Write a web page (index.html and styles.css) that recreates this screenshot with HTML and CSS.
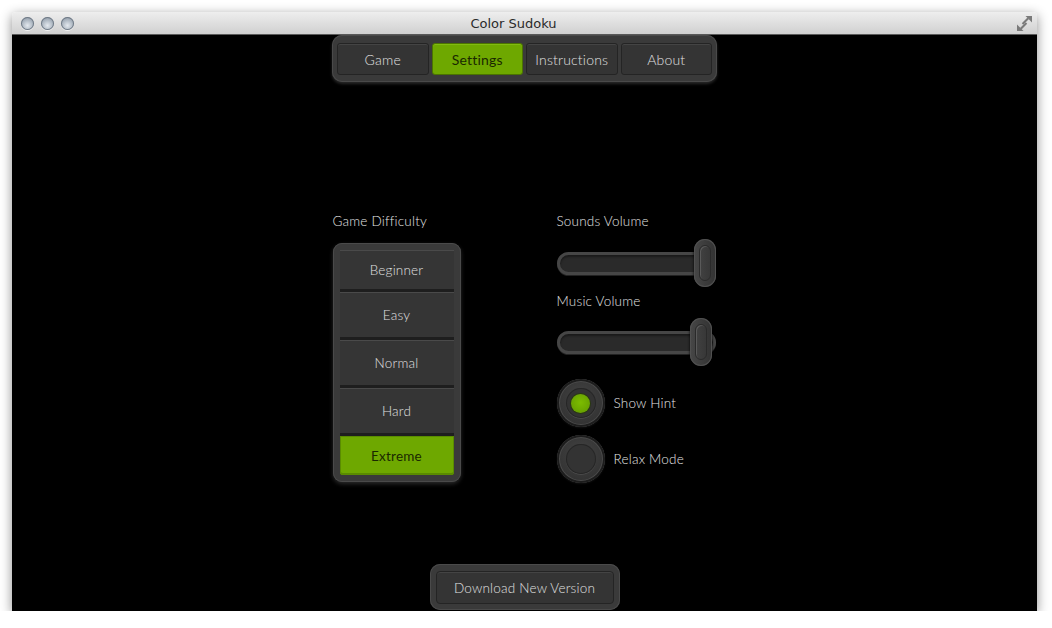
FILE: index.html
```html
<!DOCTYPE html>
<html lang="en">
<head>
  <meta charset="UTF-8">
  <title>Color Sudoku</title>
  <link rel="stylesheet" href="styles.css">
</head>
<body>
  <div class="window">
    <div class="titlebar">
      <div class="lights">
        <span class="light"></span>
        <span class="light"></span>
        <span class="light"></span>
      </div>
      <div class="title">Color Sudoku</div>
      <svg class="resize" width="15" height="15" viewBox="0 0 15 15">
        <path d="M15 0 L15 6.5 L8.5 0 Z" fill="#7a7a7a"/>
        <path d="M11.2 2.3 L5.5 8" stroke="#7a7a7a" stroke-width="2"/>
        <path d="M0 15 L0 8.5 L6.5 15 Z" fill="#7a7a7a"/>
        <path d="M3.8 12.7 L9.5 7" stroke="#7a7a7a" stroke-width="2"/>
      </svg>
    </div>

    <div class="content">
      <!-- верхнее меню -->
      <div class="tabs">
        <div class="tab">Game</div>
        <div class="tab active">Settings</div>
        <div class="tab">Instructions</div>
        <div class="tab">About</div>
      </div>

      <div class="settings">
        <div class="col-left">
          <div class="label">Game Difficulty</div>
          <div class="levels">
            <div class="levels-inner">
              <div class="level short">Beginner</div>
              <div class="level">Easy</div>
              <div class="level">Normal</div>
              <div class="level">Hard</div>
              <div class="level short active">Extreme</div>
            </div>
          </div>
        </div>

        <div class="col-right">
          <div class="label">Sounds Volume</div>
          <div class="slider">
            <div class="track"></div>
            <div class="knob" style="left: 137px;"></div>
          </div>
          <div class="label label-music">Music Volume</div>
          <div class="slider slider-music">
            <div class="track"></div>
            <div class="knob" style="left: 133px;"></div>
          </div>
          <div class="radio radio-first">
            <div class="dial"><div class="hole"><div class="dot"></div></div></div>
            <span>Show Hint</span>
          </div>
          <div class="radio">
            <div class="dial"><div class="hole"></div></div>
            <span>Relax Mode</span>
          </div>
        </div>
      </div>

      <div class="download">
        <div class="download-btn">Download New Version</div>
      </div>
    </div>
  </div>
</body>
</html>
```

FILE: styles.css
```css
* { box-sizing: border-box; }
body { margin: 0; background: #fff; font-family: Lato, "Open Sans", sans-serif; }

.window {
  margin: 12px 0 0 12px;
  width: 1025px;
  height: 599px;
  display: flex;
  flex-direction: column;
  box-shadow: 0 3px 12px rgba(0, 0, 0, 0.45);
  border-radius: 4px 4px 0 0;
  overflow: hidden;
}

/* заголовок окна */
.titlebar {
  flex-shrink: 0;
  height: 23px;
  display: flex;
  align-items: center;
  background: linear-gradient(#eeeeee, #d0d0d0);
  border-bottom: 1px solid #5a5a5a;
}
.lights { display: flex; gap: 7px; margin-left: 9px; }
.light {
  width: 13px;
  height: 13px;
  border-radius: 50%;
  background: radial-gradient(circle at 50% 65%, #e4e9ef 0, #a9b3be 55%, #7f8a96 100%);
  box-shadow: inset 0 0 0 1px #6f7a86, 0 1px 0 rgba(255, 255, 255, 0.7);
}
.title {
  flex: 1;
  text-align: center;
  font-family: "DejaVu Sans", sans-serif;
  font-size: 13px;
  color: #2a2a2a;
  margin-right: 64px;
}
.resize { margin-right: 5px; }

.content {
  flex: 1;
  background: #000;
  display: flex;
  flex-direction: column;
  align-items: center;
  color: #e2e2e2;
  font-weight: 300;
  letter-spacing: 0.2px;
}

/* вкладки */
.tabs {
  width: 385px;
  height: 47px;
  display: flex;
  gap: 3px;
  padding: 8px 5px 7px;
  background: #3a3a3a;
  border-radius: 10px;
  box-shadow: inset 0 0 0 1px #4a4a4a, 0 2px 3px rgba(80, 80, 80, 0.5);
}
.tab {
  flex: 1;
  display: flex;
  align-items: center;
  justify-content: center;
  background: #343434;
  border: 1px solid #242424;
  border-radius: 3px;
  box-shadow: inset 0 1px 0 #444;
  font-size: 14px;
  color: #e0e0e0;
}
.tab.active {
  background: #6ea800;
  border-color: #4b7400;
  box-shadow: inset 0 1px 0 #80bb10;
  color: #1a2800;
  font-weight: 400;
}

.settings {
  margin-top: 131px;
  display: flex;
  gap: 96px;
}
.label { font-size: 13.5px; line-height: 16px; color: #e4e4e4; }

.col-left { width: 128px; }
.levels {
  margin-top: 14px;
  padding: 7px;
  background: #3a3a3a;
  border-radius: 9px;
  box-shadow: inset 0 0 0 1px #4a4a4a, 0 2px 4px rgba(70, 70, 70, 0.6);
}
.levels-inner {
  display: flex;
  flex-direction: column;
  gap: 3px;
  background: #1e1e1e;
  border-radius: 3px;
}
.level {
  height: 45px;
  display: flex;
  align-items: center;
  justify-content: center;
  background: #353535;
  box-shadow: inset 0 1px 0 #4a4a4a;
  font-size: 13.5px;
  color: #e0e0e0;
}
.level.short { height: 39px; }
.level.active {
  background: #6ea800;
  box-shadow: inset 0 0 0 1px #5a8c00, inset 0 -2px 0 #5a8a00;
  color: #1a2800;
  font-weight: 400;
  border-radius: 0 0 3px 3px;
}

.col-right { width: 160px; }
.slider {
  position: relative;
  width: 160px;
  height: 48px;
  margin-top: 10px;
  padding-top: 13px;
}
.slider-music { margin-top: 9px; }
.label-music { margin-top: 6px; }
.track {
  width: 159px;
  height: 23px;
  border-radius: 12px;
  background: #2a2a2a;
  border: 3px solid #464646;
  box-shadow: inset 0 2px 2px #1a1a1a, 0 1px 0 #222;
}
.knob {
  position: absolute;
  top: 0;
  width: 22px;
  height: 48px;
  border-radius: 11px;
  background: linear-gradient(90deg, #474747, #3a3a3a 60%, #333);
  box-shadow: 0 1px 3px #000, inset 0 0 0 1px #505050;
}
.knob::after {
  content: "";
  position: absolute;
  left: 5px;
  right: 5px;
  top: 6px;
  bottom: 6px;
  border-radius: 6px;
  border: 1px solid #2a2a2a;
  box-shadow: inset 1px 1px 0 #5a5a5a;
}

.radio {
  display: flex;
  align-items: center;
  gap: 9px;
  margin-top: 8px;
  font-size: 13.5px;
  color: #e4e4e4;
}
.radio-first { margin-top: 13px; }
.dial {
  width: 48px;
  height: 48px;
  border-radius: 50%;
  display: flex;
  align-items: center;
  justify-content: center;
  background: radial-gradient(circle at 50% 40%, #434343, #333 70%);
  box-shadow: inset 0 0 0 2px #1c1c1c, inset 0 0 0 3px #4a4a4a, 0 1px 2px #111;
}
.hole {
  width: 30px;
  height: 30px;
  border-radius: 50%;
  display: flex;
  align-items: center;
  justify-content: center;
  background: #333;
  box-shadow: inset 0 0 0 1px #262626, 0 1px 0 #4a4a4a;
}
.dot {
  width: 19px;
  height: 19px;
  border-radius: 50%;
  background: radial-gradient(circle at 50% 45%, #7cbc00, #66a000 80%);
  box-shadow: 0 0 0 1px #2a3a10;
}

.download {
  margin-top: 81px;
  width: 190px;
  height: 46px;
  padding: 7px 6px 6px;
  background: #3a3a3a;
  border-radius: 10px;
  box-shadow: inset 0 0 0 1px #4a4a4a;
}
.download-btn {
  height: 100%;
  display: flex;
  align-items: center;
  justify-content: center;
  background: #343434;
  border: 1px solid #242424;
  border-radius: 4px;
  box-shadow: inset 0 1px 0 #444;
  font-size: 13.5px;
  color: #e0e0e0;
}
```
